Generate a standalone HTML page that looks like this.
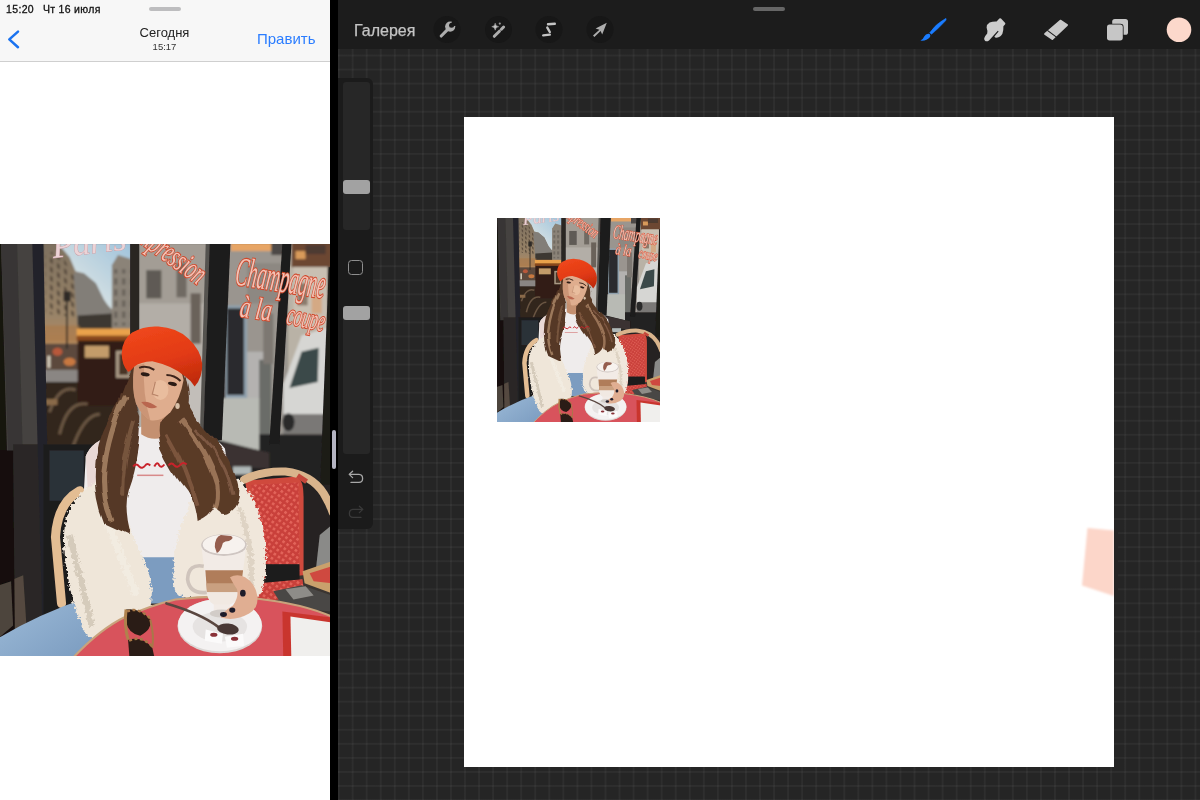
<!DOCTYPE html>
<html><head><meta charset="utf-8">
<style>
html,body{margin:0;padding:0;}
body{width:1200px;height:800px;overflow:hidden;background:#000;position:relative;font-family:"Liberation Sans",sans-serif;}
.abs{position:absolute;}
#left{left:0;top:0;width:330px;height:800px;background:#fff;overflow:hidden;}
#lhead{left:0;top:0;width:330px;height:61px;background:#f7f7f7;border-bottom:1px solid #cfcfcf;}
#right{left:338px;top:0;width:862px;height:800px;background-color:#252525;
 background-image:linear-gradient(to right,rgba(255,255,255,0.018) 0,rgba(255,255,255,0.042) .5px,rgba(255,255,255,0.042) 1.3px,rgba(255,255,255,0.018) 1.8px,transparent 1.9px),linear-gradient(to bottom,rgba(255,255,255,0.018) 0,rgba(255,255,255,0.042) .5px,rgba(255,255,255,0.042) 1.3px,rgba(255,255,255,0.018) 1.8px,transparent 1.9px);
 background-size:14.06px 14.06px;background-position:-0.35px -1.6px;overflow:hidden;}
#rtool{left:0;top:0;width:862px;height:49px;background:#1c1c1c;}
#canvas{left:126px;top:117px;width:650px;height:650px;background:#fff;}
.t{position:absolute;white-space:nowrap;line-height:1;will-change:transform;}
</style></head><body>
<svg width="0" height="0" style="position:absolute"><symbol id="ph" viewBox="1 1 327.2 409.2" preserveAspectRatio="none">
<defs>
<filter id="b1" x="-5%" y="-5%" width="110%" height="110%"><feGaussianBlur stdDeviation="1.3"/></filter>
<filter id="b2" x="-5%" y="-5%" width="110%" height="110%"><feGaussianBlur stdDeviation="0.7"/></filter>
<filter id="b3" x="-10%" y="-10%" width="120%" height="120%"><feGaussianBlur stdDeviation="2.5"/></filter>
<linearGradient id="sky" x1="1" y1="0" x2="0" y2="1"><stop offset="0" stop-color="#9fc3dc"/><stop offset="0.6" stop-color="#cfdde2"/><stop offset="1" stop-color="#e4e4de"/></linearGradient>
<linearGradient id="bl1" x1="0" y1="0" x2="0" y2="1"><stop offset="0" stop-color="#7d705f"/><stop offset="0.7" stop-color="#9a8468"/><stop offset="1" stop-color="#b98a5c"/></linearGradient>
<linearGradient id="beret" x1="0.2" y1="0" x2="0.6" y2="1"><stop offset="0" stop-color="#f0481c"/><stop offset="0.6" stop-color="#e23a14"/><stop offset="1" stop-color="#c22c0e"/></linearGradient>
<linearGradient id="hairL" x1="0" y1="0" x2="1" y2="0"><stop offset="0" stop-color="#5a3b2a"/><stop offset="0.5" stop-color="#8c664c"/><stop offset="1" stop-color="#4a2e20"/></linearGradient>
<linearGradient id="jean" x1="0" y1="0" x2="1" y2="1"><stop offset="0" stop-color="#9dbbd8"/><stop offset="1" stop-color="#7798bd"/></linearGradient>
<pattern id="chairp" width="5" height="5" patternUnits="userSpaceOnUse" patternTransform="rotate(35)"><rect width="5" height="5" fill="#c9403a"/><rect width="2.6" height="2.6" fill="#e2645a"/></pattern>
<pattern id="winp" width="7" height="9" patternUnits="userSpaceOnUse" patternTransform="skewY(38)"><rect x="1.5" y="1.5" width="3" height="5" fill="#4a3e32" opacity=".75"/></pattern>
<pattern id="winp2" width="8" height="11" patternUnits="userSpaceOnUse"><rect x="2" y="2" width="3.4" height="6.4" fill="#5b554e" opacity=".7"/></pattern>
<filter id="fur" x="-10%" y="-10%" width="120%" height="120%"><feTurbulence type="fractalNoise" baseFrequency="0.35" numOctaves="2" seed="3" result="n"/><feDisplacementMap in="SourceGraphic" in2="n" scale="7" xChannelSelector="R" yChannelSelector="G"/><feGaussianBlur stdDeviation="0.5"/></filter>
<filter id="hairf" x="-10%" y="-10%" width="120%" height="120%"><feTurbulence type="fractalNoise" baseFrequency="0.05 0.02" numOctaves="2" seed="8" result="n"/><feDisplacementMap in="SourceGraphic" in2="n" scale="9" xChannelSelector="R" yChannelSelector="G"/><feGaussianBlur stdDeviation="0.5"/></filter>
<clipPath id="pc"><rect width="329" height="411"/></clipPath>
</defs>
<g clip-path="url(#pc)">
<rect width="329" height="411" fill="#3b3531"/>
<!-- ===== background window ===== -->
<g filter="url(#b1)">
 <!-- pane 1 -->
 <rect x="44" y="0" width="90" height="100" fill="#8a8276"/>
 <polygon points="58,0 131,0 131,20 118,14 112,22 112,66 104,58 96,40 84,30 76,28 70,14" fill="url(#sky)"/>
 <polygon points="44,0 58,0 70,16 76,30 79,78 79,104 44,104" fill="url(#bl1)"/>
 <polygon points="46,12 58,6 76,34 78,74 46,70" fill="url(#winp)"/>
 <polygon points="74,30 84,30 96,40 104,56 112,68 112,86 78,86" fill="#827e78"/><polygon points="78,72 112,70 112,88 78,88" fill="#3e3932"/>
 <polygon points="112,22 118,12 131,16 131,88 112,88" fill="#8b8378"/>
 <rect x="114" y="26" width="17" height="56" fill="url(#winp2)"/>
 <!-- street level -->
 <rect x="44" y="100" width="40" height="30" fill="#5b4a3c"/>
 <rect x="44" y="82" width="36" height="16" fill="#a87848" opacity=".6"/>
 <rect x="44" y="126" width="42" height="14" fill="#8a8683"/>
 <rect x="44" y="138" width="90" height="70" fill="#33261e"/>
 <rect x="78" y="92" width="60" height="70" fill="#301d13"/>
 <rect x="77" y="85" width="54" height="8" fill="#eaa24c"/>
 <rect x="77" y="92" width="54" height="5" fill="#8a4a1c"/>
 <rect x="85" y="102" width="24" height="12" fill="#c39c6a"/>
 <rect x="116" y="107" width="14" height="27" fill="#a89884"/>
 <rect x="119" y="110" width="9" height="21" fill="#4a3428"/>
 <ellipse cx="58" cy="108" rx="5" ry="4" fill="#b8583a"/>
 <ellipse cx="70" cy="118" rx="6" ry="4" fill="#c87840"/>
 <rect x="48" y="112" width="3" height="12" fill="#d8d0c0"/>
 <!-- chairs reflection -->
 <path d="M50,168 Q60,140 76,146 M60,190 Q68,156 88,160 M72,206 Q84,170 100,170" stroke="#6a5643" stroke-width="3" fill="none"/>
 <rect x="46" y="155" width="12" height="6" fill="#8a6a48"/>
 <!-- lamp post -->
 <rect x="66.5" y="55" width="1.6" height="50" fill="#2a2622"/>
 <rect x="64" y="48" width="7" height="10" fill="#2e2a26"/>
 <!-- pane 2 -->
 <rect x="138" y="0" width="70" height="190" fill="#a39d95"/>
 <rect x="138" y="60" width="70" height="130" fill="#b3aea7"/>
 <rect x="146" y="27" width="15" height="28" fill="#5f5a55"/>
 <rect x="176" y="20" width="10" height="34" fill="#6f6a63"/>
 <rect x="190" y="50" width="10" height="50" fill="#6b625a"/>
 <rect x="186" y="120" width="22" height="66" fill="#c2beb9"/>
 <!-- pane 3 -->
 <rect x="226" y="0" width="60" height="206" fill="#9a958f"/>
 <rect x="230" y="0" width="40" height="8" fill="#e7a565"/>
 <rect x="270" y="0" width="14" height="12" fill="#4e4a46"/>
 <rect x="246" y="20" width="40" height="40" fill="#8d8882"/>
 <rect x="244" y="108" width="26" height="96" fill="#b4b2b0"/>
 <rect x="224" y="62" width="22" height="94" fill="#8fa0ad"/>
 <rect x="226" y="65" width="17" height="86" fill="#2a2b2e"/>
 <rect x="258" y="116" width="12" height="86" fill="#6a6c68"/><rect x="262" y="70" width="10" height="50" fill="#7d7872"/>
 
 <!-- pane 4 -->
 <rect x="286" y="0" width="40" height="206" fill="#b9b2a6"/>
 <rect x="290" y="0" width="40" height="24" fill="#6c4632"/><rect x="294" y="8" width="10" height="8" fill="#d89a5a"/><rect x="304" y="2" width="20" height="9" fill="#4e3a30"/>
 <rect x="292" y="24" width="34" height="60" fill="#c9c0b2"/>
 <rect x="296" y="40" width="10" height="22" fill="#8a7a6c"/>
 <rect x="310" y="50" width="10" height="20" fill="#d8a070" opacity=".7"/>
 <polygon points="300,92 326,84 326,186 282,186 282,140" fill="#d6d6d3"/>
 <polygon points="300,108 317,104 316,138 288,144" fill="#3b4a48"/>
 <rect x="282" y="170" width="44" height="20" fill="#7a7876"/>
 <ellipse cx="287" cy="178" rx="6" ry="9" fill="#2a2a2a"/>
 <!-- lower dark band -->
 <rect x="200" y="190" width="130" height="56" fill="#242020"/><polygon points="218,154 258,154 258,206 218,196" fill="#b8bab4"/>
 <polygon points="221,198 268,208 268,224 221,222" fill="#3a3331"/>
 <rect x="232" y="222" width="18" height="8" fill="#b0b8b8"/>
</g>

<!-- frames -->
<g filter="url(#b2)">
 <polygon points="0,0 3,0 12,120 16,420 0,420" fill="#17120f"/>
 <polygon points="2,0 36,0 46,420 14,420" fill="#45423f"/>
 <polygon points="2,0 18,0 26,300 12,300" fill="#383634"/>
 <polygon points="14,200 46,200 50,420 14,420" fill="#2a2826"/>
 <polygon points="33,0 44,0 52,420 44,420" fill="#24232a"/>
 <polygon points="0,340 24,330 28,392 0,420" fill="#55493f"/>
 <polygon points="0,206 14,206 16,420 0,420" fill="#120e0c"/>
 <polygon points="0,340 12,336 14,380 0,392" fill="#4e443c"/>
 <polygon points="130,0 139,0 139,92 130,92" fill="#2a2522"/>
 <polygon points="205,0 209,0 203,196 199,196" fill="#55524f"/><polygon points="209,0 229.5,0 221,196 202.5,196" fill="#1d1b1b"/>
 <polygon points="281,0 290,0 278,200 268,200" fill="#1b1a1a"/>
 <polygon points="327,24 330,24 330,250 318,250" fill="#1c1a19"/>
</g>

<g font-family="Liberation Serif,serif" font-style="italic" font-weight="normal" filter="url(#b2)">
 <g fill="#f3c3b6" stroke="#d0492c" stroke-width="1.7" paint-order="stroke">
 <text font-size="34" transform="translate(54 15) rotate(-7) scale(1 1)" fill="#ecd3d6" stroke="#c79aa2" stroke-width=".8">Paris</text>
 <text font-size="25" transform="translate(131 -6) rotate(36) scale(.74 1.25)">Impression</text>
 <text font-size="30" transform="translate(233 41) rotate(9) scale(.62 1.35)">Champagne</text>
 <text font-size="26" transform="translate(238 73) rotate(8) scale(.8 1.2)">à la</text>
 <text font-size="25" transform="translate(284 80) rotate(12) scale(.64 1.2)">coupe</text>
 </g>
</g>
<!-- ===== foreground ===== -->
<g filter="url(#b2)">
 <!-- dark behind chairs lower -->
 <rect x="44" y="200" width="60" height="170" fill="#1f1c1c"/>
 <rect x="50" y="206" width="34" height="50" fill="#2b3138"/>
 <rect x="296" y="240" width="34" height="90" fill="#262321"/>
 <polygon points="318,290 330,280 330,326 314,326" fill="#8a8a88"/>
 <!-- right red chair -->
 <path d="M244,236 L296,232 Q302,236 302,252 L302,330 L258,334 Z" fill="#cf4a3e"/>
 <path d="M250,240 L297,238 L298,326 L262,330 Z" fill="url(#chairp)"/>
 <path d="M243,235 Q262,226 284,227 Q310,230 322,249 Q328,259 331,268" stroke="#d9b48c" stroke-width="8" fill="none" stroke-linecap="round"/>
 <path d="M296,231 L305,237" stroke="#c4473a" stroke-width="5"/>
 <rect x="264" y="319" width="34" height="20" fill="#1d1b1b"/>
 <polygon points="258,338 301,334 303,352 255,356" fill="url(#chairp)"/>
 <!-- tray and stuff right -->
 <polygon points="301,326 330,316 330,348 303,338" fill="#c9a06c"/>
 <polygon points="308,328 330,321 330,338 312,336" fill="#cf4a40"/>
 <polygon points="272,346 300,340 330,350 330,366 282,362" fill="#4a4744"/>
 <polygon points="284,344 304,341 312,350 292,354" fill="#8e8c88"/>
 <!-- left rattan chair -->
 <path d="M80,246 Q58,258 56,292 L62,358" stroke="#e3bd93" stroke-width="9" fill="none" stroke-linecap="round"/>
 <!-- jeans -->
 <polygon points="140,306 184,306 184,358 140,358" fill="#7c9cc0"/>
 <path d="M0,392 Q40,368 88,352 L100,380 L84,420 L0,420 Z" fill="url(#jean)"/>
 <!-- t-shirt -->
 <path d="M86,212 Q92,196 116,190 L150,180 L178,182 Q210,186 224,204 L230,240 L196,312 L138,312 L120,290 L84,250 Z" fill="#efecec"/>
 <path d="M86,212 Q92,196 112,192 L108,236 L88,244 Z" fill="#ead9d6"/>
 <!-- neck -->
 <path d="M141,166 L170,166 L170,188 Q156,200 141,190 Z" fill="#c4906f"/>
 <!-- fur left -->
 <g filter="url(#fur)">
 <path d="M96,238 Q110,236 122,262 Q132,290 146,320 Q156,346 148,372 Q132,384 112,392 Q96,400 86,388 Q72,360 68,330 Q62,296 66,276 Q74,250 96,238 Z" fill="#efe6d9"/>
 <path d="M70,290 Q80,330 92,380" stroke="#cbbfae" stroke-width="6" fill="none" opacity=".7"/>
 <path d="M100,262 Q118,300 136,350" stroke="#f4eee4" stroke-width="7" fill="none" opacity=".7"/>
 <!-- fur right -->
 <path d="M196,236 Q214,222 236,234 Q256,250 263,290 Q268,330 258,352 L210,356 L184,352 Q172,350 173,330 Q172,296 186,268 Z" fill="#f0e7db"/>
 <path d="M238,262 Q252,300 250,340" stroke="#d2c6b4" stroke-width="5" fill="none" opacity=".6"/>
 </g>
 <!-- hair left -->
 <g filter="url(#hairf)">
 <path d="M136,118 Q122,140 118,160 Q100,186 96,214 Q92,250 104,278 L130,290 Q122,262 128,242 Q134,226 137,206 Q140,190 140,172 Q134,160 133,140 Z" fill="#553725"/>
 <path d="M126,150 Q108,190 104,226 Q102,252 112,276" stroke="#a98565" stroke-width="5" fill="none" opacity=".85"/>
 <path d="M134,176 Q122,214 122,250" stroke="#7a5840" stroke-width="4" fill="none" opacity=".9"/>
 <!-- hair right -->
 <path d="M180,124 Q190,140 188,160 Q196,176 212,192 Q232,212 238,240 Q240,258 230,266 Q222,272 214,262 Q208,274 196,278 Q194,258 186,246 Q170,226 160,204 Q156,190 158,178 Q176,166 180,124 Z" fill="#5a3a28"/>
 <path d="M180,176 Q206,206 216,240 Q218,256 214,264" stroke="#a57e5f" stroke-width="5" fill="none" opacity=".85"/>
 <path d="M166,190 Q186,224 196,262" stroke="#80593f" stroke-width="4" fill="none" opacity=".9"/>
 <path d="M196,186 Q226,214 232,250" stroke="#86604a" stroke-width="3" fill="none" opacity=".8"/>
 </g>
 <!-- table -->
 <path d="M66,420 Q98,384 126,371 Q150,360 175,354 Q215,349 255,353 Q300,358 330,371 L330,420 Z" fill="#d8535b"/>
 <path d="M66,420 Q98,384 126,371 Q150,360 175,354 Q215,349 255,353 Q300,358 330,371" stroke="#c9a37c" stroke-width="2" fill="none"/>
 <!-- menu -->
 <polygon points="281,366 330,372 330,420 282,420" fill="#c9362e"/>
 <polygon points="289,371 330,377 330,420 290,420" fill="#f0efed"/>
 <!-- face -->
 <path d="M134,122 Q131,146 136,160 Q142,172 150,176 Q160,178 170,168 Q180,154 183,136 Q180,118 160,114 Q142,112 134,122 Z" fill="#dfad8e"/>
 <path d="M134,122 Q131,146 136,160 Q142,172 150,176 Q142,150 144,120 Z" fill="#b98262" opacity=".55"/>
 <ellipse cx="160" cy="146" rx="8" ry="10" fill="#f0c8a8" opacity=".6"/>
 <path d="M139,124 Q146,121 154,126 M166,131 Q174,131 180,137" stroke="#3a241a" stroke-width="2" fill="none"/>
 <ellipse cx="145" cy="130.5" rx="4.5" ry="1.9" fill="#2c1a14" transform="rotate(8 145 130.5)"/>
 <ellipse cx="172" cy="140" rx="4.5" ry="1.9" fill="#2c1a14" transform="rotate(14 172 140)"/>
 <path d="M141,158 Q148,156 157,163 Q148,167 141,158 Z" fill="#b9664f"/>
 <path d="M155,138 L152,150 L158,152" stroke="#b98468" stroke-width="1.2" fill="none"/>
 <ellipse cx="177" cy="162" rx="2.2" ry="3" fill="#d8c0a8"/>
 <!-- beret -->
 <path d="M121.6,110 Q122,96 132,89 Q144,82 158,83 Q176,84 188,95 Q200,106 201.5,120 Q202,134 194,142.5 Q190,136 184,132 Q172,122 152,117.5 Q140,118 134,123 Q130,128 128,128 Q122,122 121.6,110 Z" fill="url(#beret)"/>
 <!-- shirt text -->
 <path d="M133,222 q3,-4 6,0 q3,3 6,-1 q2,-3 5,0 m4,1 q3,-6 5,-1 q2,3 5,-1 m4,1 q3,-4 6,0 q3,3 6,-1 q3,-3 6,0" stroke="#c8242c" stroke-width="2" fill="none"/>
 <rect x="137" y="230" width="26" height="1.5" fill="#d88a8a"/>
 <!-- saucer -->
 <ellipse cx="219" cy="380.5" rx="42" ry="27" fill="#dcd8d6"/>
 <ellipse cx="219" cy="379.5" rx="41.5" ry="26" fill="#f4f2f2"/>
 <ellipse cx="219" cy="381" rx="27" ry="15" fill="#e6e3e2"/>
 <!-- glass -->
 <path d="M200.6,300 L245.3,300 L239.5,346 Q238,356 229,359 L229,366 L213,366 L213,359 Q207,356 206,346 Z" fill="#f2ebe6"/>
 <path d="M204.6,325 L242,325 L239.6,346 L206.2,346 Z" fill="#b07d5a"/>
 <path d="M205.6,338 L240.6,338 L239.6,347 L206.2,347 Z" fill="#c9a080"/>
 <path d="M206,347 L239.6,347 Q238,356 229,359 L213,359 Q207,356 206,347 Z" fill="#f1e9e2"/>
 <ellipse cx="223" cy="300" rx="22.6" ry="10.8" fill="#cfc6c2"/>
 <ellipse cx="223" cy="299.4" rx="21" ry="9.6" fill="#f7f2ee"/>
 <path d="M214,302 Q214,292 220,290 L230,291 Q234,293 228,296 Q224,296 222,298 Q220,306 216,308 Z" fill="#8a4c3c" opacity=".9"/>
 <path d="M203,321 Q188,318 187,334 Q189,349 206,347" stroke="#cfc4bc" stroke-width="3.6" fill="none"/>
 <ellipse cx="221" cy="368" rx="12" ry="4" fill="#d2ccc8"/>
 <!-- hand -->
 <path d="M229,332 Q236,328 244,332 Q254,338 256,350 Q258,362 248,368 Q234,376 220,372 Q222,366 232,360 Q238,352 236,344 Q232,338 229,332 Z" fill="#e0ae92"/>
 <ellipse cx="241.8" cy="347.8" rx="2.8" ry="3.4" fill="#1e1a2a"/>
 <ellipse cx="231.3" cy="364.6" rx="3" ry="2.6" fill="#1e1a2a"/>
 <ellipse cx="222.6" cy="369" rx="3.4" ry="2.4" fill="#1e1a2a"/>
 <!-- spoon -->
 <path d="M166,358 Q200,368 217,381" stroke="#5a4640" stroke-width="2.6" stroke-linecap="round" fill="none"/>
 <ellipse cx="227" cy="383.4" rx="10.8" ry="5.4" fill="#4a3834" transform="rotate(6 227 383.4)"/>
 <!-- sugar -->
 <polygon points="205,384 222,388 221,398 204,395" fill="#fbfafa"/>
 <polygon points="224,391 242,388 243,400 226,402" fill="#fbfafa"/>
 <ellipse cx="213" cy="389" rx="3.6" ry="2" fill="#8a3038"/>
 <ellipse cx="233.6" cy="393" rx="3.6" ry="2" fill="#8a3038"/>
 <!-- sunglasses -->
 <path d="M126,364 Q140,362 150,374 Q152,384 140,390 Q128,388 126,376 Z" fill="#2a1a12"/>
 <path d="M128,394 Q142,390 152,402 L156,420 L130,420 Z" fill="#2a1a12"/>
 <path d="M126,364 Q124,380 128,394" stroke="#b0824e" stroke-width="3" fill="none"/>
 <path d="M127,366 Q138,361 150,373" stroke="#a87848" stroke-width="2.4" fill="none" stroke-dasharray="3 2.5"/>
 <path d="M129,395 Q142,389 153,402" stroke="#a87848" stroke-width="2.4" fill="none" stroke-dasharray="3 2.5"/>
 <path d="M150,374 Q154,390 152,402" stroke="#a87848" stroke-width="2" fill="none"/>
</g>
</g>

</symbol></svg>
<div id="left" class="abs">
  <div id="lhead" class="abs"></div>
  <div class="t" style="left:5.6px;top:3.6px;font-size:10.5px;letter-spacing:.35px;color:#111;-webkit-text-stroke:.3px #111;">15:20</div>
  <div class="t" style="left:43px;top:3.6px;font-size:10.5px;letter-spacing:.3px;color:#111;-webkit-text-stroke:.3px #111;">Чт 16 июля</div>
  <div class="abs" style="left:149px;top:6.7px;width:31.5px;height:4.2px;border-radius:2.1px;background:#bdbdbf;"></div>
  <svg class="abs" style="left:6px;top:28px" width="16" height="24" viewBox="6 28 16 24"><path d="M18 31.6 L9.3 39.4 L18 47.2" fill="none" stroke="#1a73f0" stroke-width="2.5" stroke-linecap="round" stroke-linejoin="round"/></svg>
  <div class="t" style="left:0;width:329px;text-align:center;top:25.8px;font-size:13px;color:#222;">Сегодня</div>
  <div class="t" style="left:0;width:329px;text-align:center;top:42px;font-size:9.5px;color:#333;">15:17</div>
  <div class="t" style="left:257px;top:31.4px;font-size:15px;color:#2b7dff;">Править</div>
  <svg class="abs" style="left:0;top:244px" width="330" height="412"><use href="#ph" width="330" height="412"/></svg>
</div>
<div class="abs" style="left:332px;top:430px;width:3.6px;height:39px;border-radius:2px;background:#b4b4c2;"></div>
<div id="right" class="abs">
  <div id="rtool" class="abs"></div>
  <div class="abs" style="left:415px;top:6.5px;width:32px;height:4.5px;border-radius:2.25px;background:#666;"></div>
  <div class="t" style="left:16px;top:22.6px;font-size:16px;color:#c4c4c4;-webkit-text-stroke:.25px #c4c4c4;">Галерея</div>

  <svg class="abs" style="left:0;top:0" width="862" height="60" viewBox="338 0 862 60">
    <g fill="#171717"><circle cx="447" cy="29.5" r="13.5"/><circle cx="498.5" cy="29.5" r="13.5"/><circle cx="549" cy="29.5" r="13.5"/><circle cx="600" cy="29.5" r="13.5"/></g>
    <!-- wrench -->
    <g stroke="#adadad" fill="none" stroke-linecap="round">
      <path d="M441.2,36 L448,29.2" stroke-width="3.1"/>
    </g>
    <circle cx="450.2" cy="26.6" r="5.1" fill="#adadad"/>
    <path d="M449.6,27.2 L452.4,21 L458,20 L456.4,25.6 Z" fill="#171717"/><circle cx="451.6" cy="25.2" r="2.5" fill="#171717"/>
    <!-- wand -->
    <g stroke="#adadad" fill="none" stroke-linecap="round">
      <path d="M494.3,36.3 L499.4,31.2" stroke-width="3"/>
      <path d="M501.4,29.2 L503.6,27" stroke-width="3"/>
    </g>
    <circle cx="499.8" cy="23.6" r="1.1" fill="#9a9a9a"/><path d="M495.2,23.2 Q495.5,26.4 498.6,26.7 Q495.5,27 495.2,30.2 Q494.9,27 491.8,26.7 Q494.9,26.4 495.2,23.2 Z" fill="#c4c4c4" stroke="#c4c4c4" stroke-width=".5"/>
    <!-- S -->
    <g stroke="#c4c4c4" fill="none" stroke-linecap="round" stroke-width="2.4">
      <path d="M548,24.3 L554.8,23.8"/><path d="M547.3,27.6 L549.8,32"/><path d="M543.2,35.4 L549.8,34.6"/>
    </g>
    <!-- arrow -->
    <path d="M606.8,22.8 L595.6,28.4 L599.4,29.8 L593,35.6 L594.4,37 L600.6,31 L602.2,34.4 Z" fill="#adadad"/>
    <!-- brush -->
    <path d="M945.9,18.3 Q946.8,19 945.6,20.8 Q939,28 931.6,34.3 L929.6,32.8 Q936,23.6 945.9,18.3 Z" fill="#1a7cff" stroke="#1a7cff" stroke-width=".4"/>
    <path d="M929.2,33.8 Q931.2,35.2 929.6,37.6 Q926.6,41.2 920.4,40.6 Q923.4,38.8 924.2,36.4 Q926,33.2 929.2,33.8 Z" fill="#1a7cff"/>
    <!-- smudge -->
    <path d="M984.2,38.2 Q984.6,36.6 987.2,33.6 Q987.8,31 986.6,27.6 Q986.8,24.2 989.6,22.6 Q992.6,21.2 996.6,21.4 L999.4,18.4 Q1000.2,17.8 1001,18.6 L1005.2,23 Q1005.6,23.8 1005,24.4 L1003.4,26.2 Q1003.6,30.4 1002.4,33.8 Q1000.6,37.4 996.6,37.8 Q994.6,37.6 994.4,36.4 L998.6,31.4 L997.8,30.8 L989,40.4 Q987,41.8 985.2,41 Q984,40 984.2,38.2 Z" fill="#cdcdcd"/>
    <!-- eraser -->
    <path d="M1060.4,20.6 L1067.1,25.1 L1052.3,39.1 L1045,34 Z" fill="#c9c9c9" stroke="#c9c9c9" stroke-width="1.8" stroke-linejoin="round"/>
    <path d="M1047.4,30.4 L1056.8,37.4" stroke="#1c1c1c" stroke-width="1.1"/>
    <!-- layers -->
    <rect x="1112.2" y="19" width="15.8" height="15.8" rx="2.6" fill="#c6c6c6"/>
    <rect x="1106.2" y="23.8" width="17.4" height="17.4" rx="3.2" fill="#1c1c1c"/>
    <rect x="1107" y="24.6" width="15.8" height="15.8" rx="2.6" fill="#c6c6c6"/>
    <!-- color -->
    <circle cx="1179" cy="29.8" r="12.3" fill="#fcd8cb"/>
  </svg>
  <!-- sidebar -->
  <div class="abs" style="left:0;top:78px;width:35px;height:451px;background:#1b1b1b;border-radius:0 6px 6px 0;"></div>
  <div class="abs" style="left:4.5px;top:81.5px;width:27px;height:148px;background:#272727;border-radius:3px;"></div>
  <div class="abs" style="left:4.5px;top:180px;width:27px;height:14px;background:#a2a2a2;border-radius:3px;"></div>
  <div class="abs" style="left:10px;top:260px;width:15px;height:15px;border:1.2px solid #8e8e8e;border-radius:3.5px;box-sizing:border-box;"></div>
  <div class="abs" style="left:4.5px;top:306px;width:27px;height:148px;background:#272727;border-radius:3px;"></div>
  <div class="abs" style="left:4.5px;top:305.5px;width:27px;height:14px;background:#a2a2a2;border-radius:3px;"></div>
  <svg class="abs" style="left:8px;top:468px" width="20" height="56" viewBox="346 468 20 56">
    <g fill="none" stroke="#a8a8a8" stroke-width="1.3" stroke-linecap="round" stroke-linejoin="round">
      <path d="M352.6,471.2 L349.2,474.4 L352.6,477.6"/><path d="M349.6,474.4 L359,474.4 Q362.6,474.6 362.6,478.4 Q362.6,482.2 359,482.4 L351,482.4"/>
    </g>
    <g fill="none" stroke="#3a3a3a" stroke-width="1.3" stroke-linecap="round" stroke-linejoin="round">
      <path d="M359.4,506.2 L362.8,509.4 L359.4,512.6"/><path d="M362.4,509.4 L353,509.4 Q349.4,509.6 349.4,513.4 Q349.4,517.2 353,517.4 L361,517.4"/>
    </g>
  </svg>
  <div id="canvas" class="abs"></div>
  <svg class="abs" style="left:740px;top:524px" width="40" height="76" viewBox="1078 524 40 76"><defs><filter id="sb"><feGaussianBlur stdDeviation="0.8"/></filter></defs><path d="M1087.5,528 L1114,530.5 L1114,596 L1082,585.5 Z" fill="#fcd6c9" filter="url(#sb)"/><rect x="1114" y="524" width="4" height="76" fill="#252525"/></svg>
  <svg class="abs" style="left:159px;top:218px" width="163" height="204"><use href="#ph" width="163" height="204"/></svg>
</div>
</body></html>
